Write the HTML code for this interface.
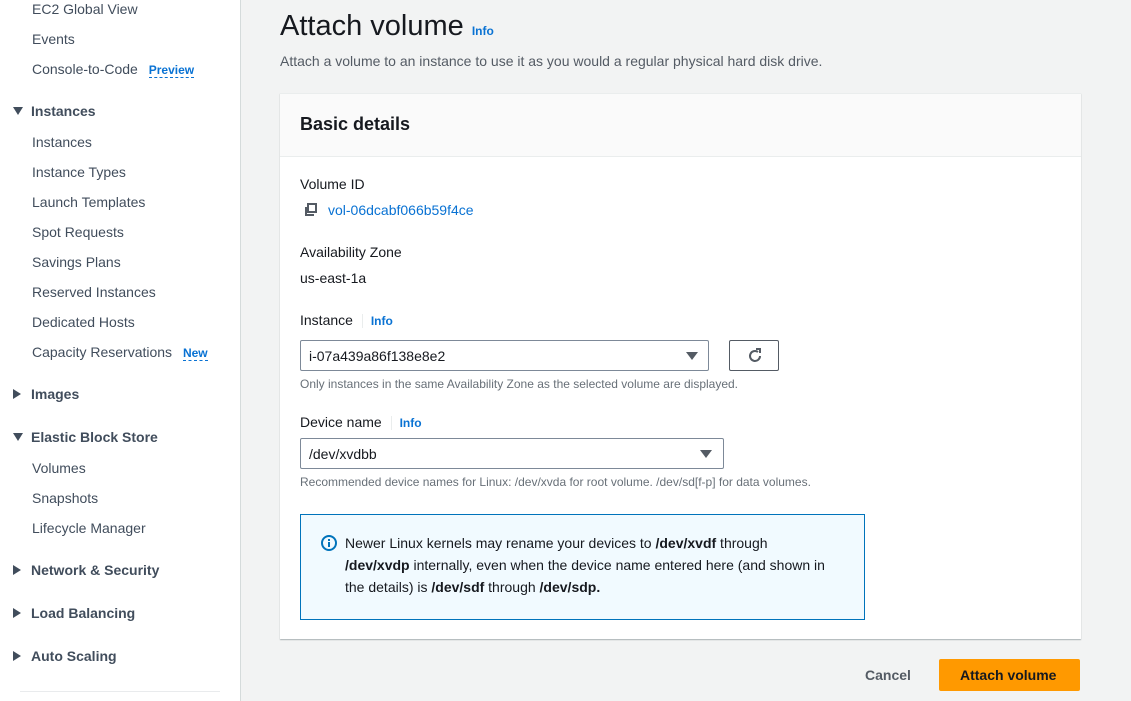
<!DOCTYPE html>
<html><head><meta charset="utf-8"><style>
*{margin:0;padding:0;box-sizing:border-box}
body{width:1131px;height:701px;overflow:hidden;background:#f2f3f3;font-family:"Liberation Sans",sans-serif;font-size:14px;color:#16191f;position:relative}
.a{position:absolute;white-space:nowrap;line-height:18px}
#side{position:absolute;left:0;top:0;width:241px;height:701px;background:#fff;border-right:1px solid #d5dbdb}
.s{color:#414d5c;left:32px}
.h{color:#414d5c;left:31px;font-weight:bold}
.tri{position:absolute;left:13px;width:0;height:0}
.down{border-left:5px solid transparent;border-right:5px solid transparent;border-top:8px solid #414d5c}
.right{border-top:5px solid transparent;border-bottom:5px solid transparent;border-left:8px solid #414d5c}
.badge{color:#0972d3;font-weight:bold;font-size:12px;border-bottom:1px dashed #0972d3;line-height:15px}
.info{color:#0972d3;font-weight:bold;font-size:12px}
.card{position:absolute;left:280px;top:93px;width:801px;height:546px;background:#fff;box-shadow:0 1px 1px rgba(0,28,36,.3);border-top:1px solid #eaeded}
.hd{position:absolute;left:0;top:0;width:100%;height:63px;background:#fafafa;border-bottom:1px solid #eaeded}
.sel{position:absolute;border:1px solid #7d8998;border-radius:2px;background:#fff}
.caret{position:absolute;width:0;height:0;border-left:6px solid transparent;border-right:6px solid transparent;border-top:8px solid #545b64}
.hint{color:#687078;font-size:12px}
</style></head><body>
<div id="side">
<div class="a s" style="top:0">EC2 Global View</div>
<div class="a s" style="top:30px">Events</div>
<div class="a s" style="top:60px">Console-to-Code <span class="badge" style="margin-left:7px">Preview</span></div>
<div class="tri down" style="top:107px"></div><div class="a h" style="top:102px">Instances</div>
<div class="a s" style="top:133px">Instances</div>
<div class="a s" style="top:163px">Instance Types</div>
<div class="a s" style="top:193px">Launch Templates</div>
<div class="a s" style="top:223px">Spot Requests</div>
<div class="a s" style="top:253px">Savings Plans</div>
<div class="a s" style="top:283px">Reserved Instances</div>
<div class="a s" style="top:313px">Dedicated Hosts</div>
<div class="a s" style="top:343px">Capacity Reservations <span class="badge" style="margin-left:7px">New</span></div>
<div class="tri right" style="top:389px"></div><div class="a h" style="top:385px">Images</div>
<div class="tri down" style="top:433px"></div><div class="a h" style="top:428px">Elastic Block Store</div>
<div class="a s" style="top:459px">Volumes</div>
<div class="a s" style="top:489px">Snapshots</div>
<div class="a s" style="top:519px">Lifecycle Manager</div>
<div class="tri right" style="top:565px"></div><div class="a h" style="top:561px">Network &amp; Security</div>
<div class="tri right" style="top:608px"></div><div class="a h" style="top:604px">Load Balancing</div>
<div class="tri right" style="top:651px"></div><div class="a h" style="top:647px">Auto Scaling</div>
<div style="position:absolute;left:20px;top:691px;width:200px;border-top:1px solid #e9ebed"></div>
</div>

<div class="a" style="left:280px;top:9px;font-size:29px;line-height:34px">Attach volume <span class="info" style="font-size:12px">Info</span></div>
<div class="a" style="left:280px;top:52px;color:#545b64">Attach a volume to an instance to use it as you would a regular physical hard disk drive.</div>

<div class="card">
<div class="hd"><div class="a" style="left:20px;top:19px;font-size:18px;line-height:22px;font-weight:bold">Basic details</div></div>
<div class="a" style="left:20px;top:81px">Volume ID</div>
<svg style="position:absolute;left:24px;top:109px" width="14" height="14" viewBox="0 0 14 14"><rect x="4" y="1" width="8" height="8" fill="none" stroke="#545b64" stroke-width="2"/><path d="M2 4v8h8" fill="none" stroke="#545b64" stroke-width="2"/></svg>
<div class="a" style="left:48px;top:107px;color:#0972d3">vol-06dcabf066b59f4ce</div>
<div class="a" style="left:20px;top:149px">Availability Zone</div>
<div class="a" style="left:20px;top:175px">us-east-1a</div>
<div class="a" style="left:20px;top:217px">Instance <span style="border-left:1px solid #eaeded;margin-left:5px;padding-left:8px" class="info">Info</span></div>
<div class="sel" style="left:20px;top:246px;width:409px;height:31px"><div class="a" style="left:8px;top:6px">i-07a439a86f138e8e2</div><div class="caret" style="left:385px;top:11px"></div></div>
<div class="sel" style="left:449px;top:246px;width:50px;height:31px;border-color:#545b64"><svg style="position:absolute;left:16px;top:6px" width="18" height="18" viewBox="0 0 18 18"><path d="M14 9a5 5 0 1 1-2-4" fill="none" stroke="#545b64" stroke-width="2"/><path d="M10 2h4v4" fill="none" stroke="#545b64" stroke-width="2"/></svg></div>
<div class="a hint" style="left:20px;top:281px">Only instances in the same Availability Zone as the selected volume are displayed.</div>
<div class="a" style="left:20px;top:319px">Device name <span style="border-left:1px solid #eaeded;margin-left:5px;padding-left:8px" class="info">Info</span></div>
<div class="sel" style="left:20px;top:344px;width:424px;height:31px"><div class="a" style="left:8px;top:6px">/dev/xvdbb</div><div class="caret" style="left:399px;top:11px"></div></div>
<div class="a hint" style="left:20px;top:379px">Recommended device names for Linux: /dev/xvda for root volume. /dev/sd[f-p] for data volumes.</div>
<div style="position:absolute;left:20px;top:420px;width:565px;height:106px;background:#f1faff;border:1px solid #0073bb">
<svg style="position:absolute;left:20px;top:20px" width="16" height="16" viewBox="0 0 16 16"><circle cx="8" cy="8" r="7" fill="none" stroke="#0073bb" stroke-width="2"/><rect x="7" y="7" width="2" height="5" fill="#0073bb"/><rect x="7" y="4" width="2" height="2" fill="#0073bb"/></svg>
<div style="position:absolute;left:44px;top:17px;width:500px;line-height:22px;color:#16191f">Newer Linux kernels may rename your devices to <b>/dev/xvdf</b> through<br><b>/dev/xvdp</b> internally, even when the device name entered here (and shown in<br>the details) is <b>/dev/sdf</b> through <b>/dev/sdp.</b></div>
</div>
</div>

<div class="a" style="left:865px;top:666px;color:#545b64;font-weight:bold">Cancel</div>
<div style="position:absolute;left:939px;top:659px;width:141px;height:32px;background:#ff9900;border-radius:2px"></div>
<div class="a" style="left:960px;top:666px;font-weight:bold;color:#16191f">Attach volume</div>
</body></html>
